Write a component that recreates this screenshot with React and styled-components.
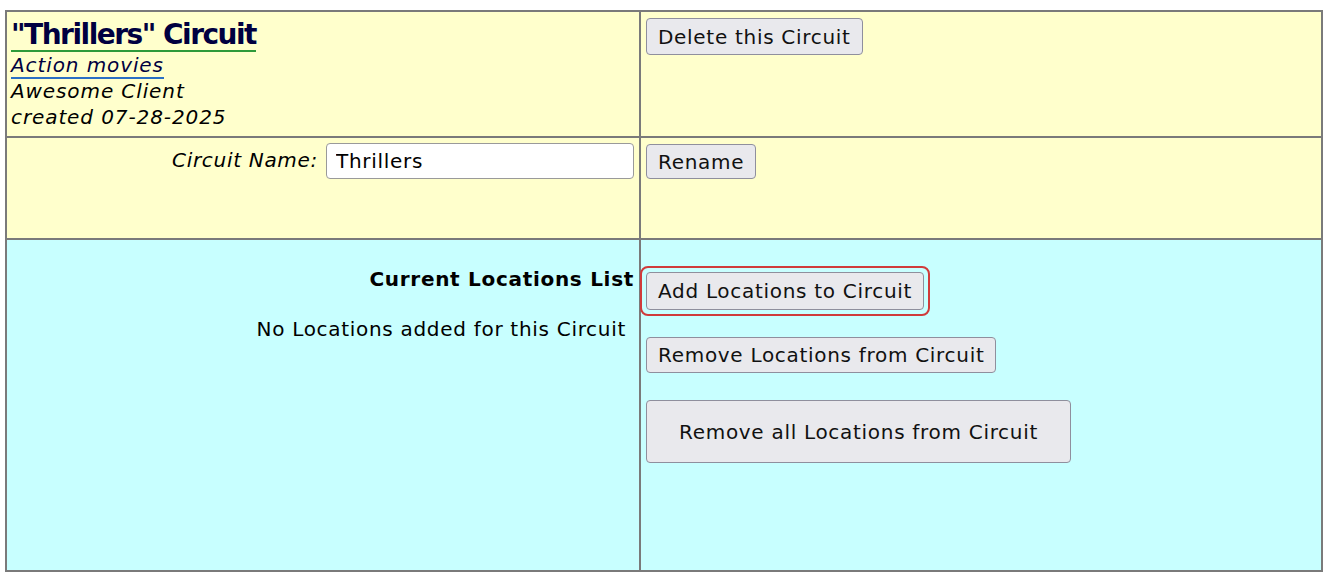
import React, { useState } from "react";
import styled, { createGlobalStyle } from "styled-components";

const GlobalStyle = createGlobalStyle`
  body {
    margin: 0;
    background: #fff;
    font-family: "DejaVu Sans", Verdana, sans-serif;
    color: #000;
  }
`;

const Page = styled.div`
  padding: 10px 8px 0 5px;
`;

const Table = styled.table`
  width: 1318px;
  table-layout: fixed;
  border-collapse: collapse;
  border: 2px solid #7a7a7a;
  font-size: 20px;
  letter-spacing: 0.7px;
`;

const Td = styled.td`
  border: 2px solid #7a7a7a;
  background: ${(props) => (props.blue ? "#c8ffff" : "#ffffcc")};
  vertical-align: top;
  text-align: ${(props) => (props.right ? "right" : "left")};
  height: ${(props) => props.h}px;
  padding: ${(props) => props.pad || "4px 5px"};
`;

const Title = styled.h2`
  display: inline-block;
  margin: 2px 0 0 0;
  font-size: 28px;
  letter-spacing: -1.5px;
  line-height: 30px;
  color: #000040;
  border-bottom: 2px solid #2e9a3a;
`;

const Meta = styled.div`
  font-style: italic;
  line-height: 26px;
  letter-spacing: 0.9px;
`;

const MetaLink = styled.a`
  color: #000040;
  text-decoration: none;
  border-bottom: 2px solid #2a6fc4;
`;

const Label = styled.label`
  font-style: italic;
  margin-right: 8px;
`;

const Input = styled.input`
  width: 308px;
  height: 36px;
  box-sizing: border-box;
  font: inherit;
  letter-spacing: inherit;
  padding: 0 9px;
  border: 1px solid #9a9a9a;
  border-radius: 4px;
  background: #fff;
  vertical-align: middle;
`;

const Button = styled.button`
  font: inherit;
  font-size: 20px;
  letter-spacing: 0.7px;
  color: #111;
  background: #e9e9ed;
  border: 1px solid #8f8f9d;
  border-radius: 4px;
  height: ${(props) => props.h || 36}px;
  padding: ${(props) => props.pad || "0 11px"};
  cursor: pointer;
`;

const Focus = styled.div`
  display: inline-block;
  padding: 4px;
  border: 2px solid #d03b3b;
  border-radius: 8px;
  margin: -6px;
`;

const Stack = styled.div`
  display: flex;
  flex-direction: column;
  align-items: flex-start;
  gap: 27px;
  padding-top: 32px;
`;

const Heading = styled.div`
  font-weight: bold;
  margin-top: 27px;
`;

const Empty = styled.div`
  margin-top: 26px;
  margin-right: 8px;
`;

export default function App() {
  const [name, setName] = useState("Thrillers");

  return (
    <Page>
      <GlobalStyle />
      <Table>
        <colgroup>
          <col style={{ width: 634 }} />
          <col />
        </colgroup>
        <tbody>
          <tr>
            <Td h={114} pad="6px 4px 4px">
              <Title>"Thrillers" Circuit</Title>
              <Meta>
                <MetaLink href="#">Action movies</MetaLink>
              </Meta>
              <Meta>Awesome Client</Meta>
              <Meta>created 07-28-2025</Meta>
            </Td>
            <Td h={114} pad="6px 5px 4px">
              <Button h={37}>Delete this Circuit</Button>
            </Td>
          </tr>
          <tr>
            <Td right h={88} pad="5px 5px 7px">
              <Label>Circuit Name:</Label>
              <Input value={name} onChange={(e) => setName(e.target.value)} />
            </Td>
            <Td h={88} pad="6px 5px 6px">
              <Button h={35}>Rename</Button>
            </Td>
          </tr>
          <tr>
            <Td right blue h={330} pad="0 5px">
              <Heading>Current Locations List</Heading>
              <Empty>No Locations added for this Circuit</Empty>
            </Td>
            <Td blue h={330} pad="0 5px">
              <Stack>
                <Focus>
                  <Button h={38}>Add Locations to Circuit</Button>
                </Focus>
                <Button>Remove Locations from Circuit</Button>
                <Button h={63} pad="0 32px">
                  Remove all Locations from Circuit
                </Button>
              </Stack>
            </Td>
          </tr>
        </tbody>
      </Table>
    </Page>
  );
}
